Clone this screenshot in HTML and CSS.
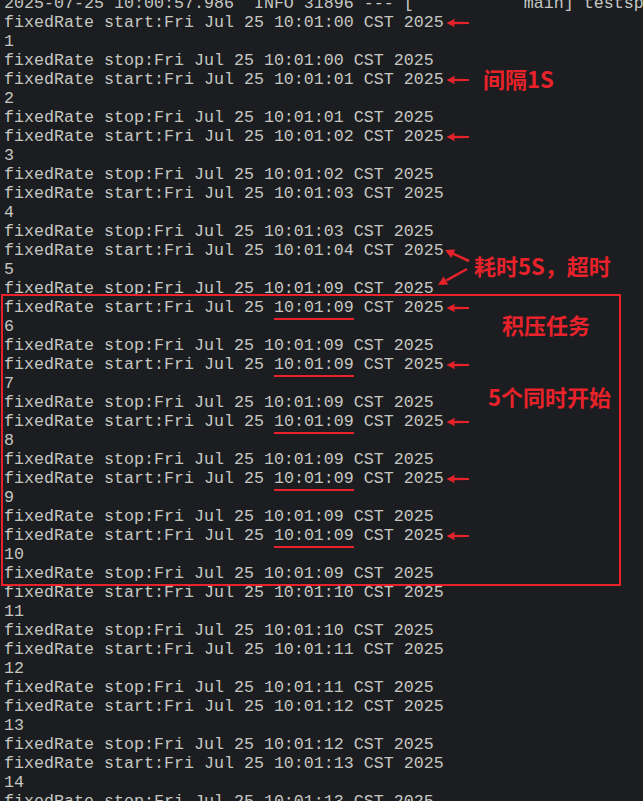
FILE: index.html
```html
<!DOCTYPE html>
<html lang="zh-CN">
<head>
    <meta charset="UTF-8">
    <meta name="viewport" content="width=device-width, initial-scale=1.0">
    <title>fixedRate 日志</title>
    <link rel="stylesheet" href="styles.css">
</head>
<body>

<div class="console">
    <div class="log">
        <div class="line">2025-07-25 10:00:57.986  INFO 31896 --- [           main] testspringboot.ScheduleApplication</div>
        <div class="line">fixedRate start:Fri Jul 25 10:01:00 CST 2025<svg class="arrow" width="24" height="10" viewBox="0 0 24 10"><path d="M0.5 5 L9 0.8 L8 3.8 L23 4 L23 6 L8 6.2 L9 9.2 Z"/></svg></div>
        <div class="line">1</div>
        <div class="line">fixedRate stop:Fri Jul 25 10:01:00 CST 2025</div>
        <div class="line">fixedRate start:Fri Jul 25 10:01:01 CST 2025<svg class="arrow" width="24" height="10" viewBox="0 0 24 10"><path d="M0.5 5 L9 0.8 L8 3.8 L23 4 L23 6 L8 6.2 L9 9.2 Z"/></svg></div>
        <div class="line">2</div>
        <div class="line">fixedRate stop:Fri Jul 25 10:01:01 CST 2025</div>
        <div class="line">fixedRate start:Fri Jul 25 10:01:02 CST 2025<svg class="arrow" width="24" height="10" viewBox="0 0 24 10"><path d="M0.5 5 L9 0.8 L8 3.8 L23 4 L23 6 L8 6.2 L9 9.2 Z"/></svg></div>
        <div class="line">3</div>
        <div class="line">fixedRate stop:Fri Jul 25 10:01:02 CST 2025</div>
        <div class="line">fixedRate start:Fri Jul 25 10:01:03 CST 2025</div>
        <div class="line">4</div>
        <div class="line">fixedRate stop:Fri Jul 25 10:01:03 CST 2025</div>
        <div class="line">fixedRate start:Fri Jul 25 10:01:04 CST 2025</div>
        <div class="line">5</div>
        <div class="line">fixedRate stop:Fri Jul 25 10:01:09 CST 2025</div>
        <div class="line">fixedRate start:Fri Jul 25 <span class="mark">10:01:09</span> CST 2025<svg class="arrow" width="24" height="10" viewBox="0 0 24 10"><path d="M0.5 5 L9 0.8 L8 3.8 L23 4 L23 6 L8 6.2 L9 9.2 Z"/></svg></div>
        <div class="line">6</div>
        <div class="line">fixedRate stop:Fri Jul 25 10:01:09 CST 2025</div>
        <div class="line">fixedRate start:Fri Jul 25 <span class="mark">10:01:09</span> CST 2025<svg class="arrow" width="24" height="10" viewBox="0 0 24 10"><path d="M0.5 5 L9 0.8 L8 3.8 L23 4 L23 6 L8 6.2 L9 9.2 Z"/></svg></div>
        <div class="line">7</div>
        <div class="line">fixedRate stop:Fri Jul 25 10:01:09 CST 2025</div>
        <div class="line">fixedRate start:Fri Jul 25 <span class="mark">10:01:09</span> CST 2025<svg class="arrow" width="24" height="10" viewBox="0 0 24 10"><path d="M0.5 5 L9 0.8 L8 3.8 L23 4 L23 6 L8 6.2 L9 9.2 Z"/></svg></div>
        <div class="line">8</div>
        <div class="line">fixedRate stop:Fri Jul 25 10:01:09 CST 2025</div>
        <div class="line">fixedRate start:Fri Jul 25 <span class="mark">10:01:09</span> CST 2025<svg class="arrow" width="24" height="10" viewBox="0 0 24 10"><path d="M0.5 5 L9 0.8 L8 3.8 L23 4 L23 6 L8 6.2 L9 9.2 Z"/></svg></div>
        <div class="line">9</div>
        <div class="line">fixedRate stop:Fri Jul 25 10:01:09 CST 2025</div>
        <div class="line">fixedRate start:Fri Jul 25 <span class="mark">10:01:09</span> CST 2025<svg class="arrow" width="24" height="10" viewBox="0 0 24 10"><path d="M0.5 5 L9 0.8 L8 3.8 L23 4 L23 6 L8 6.2 L9 9.2 Z"/></svg></div>
        <div class="line">10</div>
        <div class="line">fixedRate stop:Fri Jul 25 10:01:09 CST 2025</div>
        <div class="line">fixedRate start:Fri Jul 25 10:01:10 CST 2025</div>
        <div class="line">11</div>
        <div class="line">fixedRate stop:Fri Jul 25 10:01:10 CST 2025</div>
        <div class="line">fixedRate start:Fri Jul 25 10:01:11 CST 2025</div>
        <div class="line">12</div>
        <div class="line">fixedRate stop:Fri Jul 25 10:01:11 CST 2025</div>
        <div class="line">fixedRate start:Fri Jul 25 10:01:12 CST 2025</div>
        <div class="line">13</div>
        <div class="line">fixedRate stop:Fri Jul 25 10:01:12 CST 2025</div>
        <div class="line">fixedRate start:Fri Jul 25 10:01:13 CST 2025</div>
        <div class="line">14</div>
        <div class="line">fixedRate stop:Fri Jul 25 10:01:13 CST 2025</div>
    </div>

    <!-- anotaciones encima del log -->
    <div class="box"></div>

    <svg class="pointers" width="60" height="55" viewBox="0 0 60 55">
        <line x1="39" y1="21" x2="22" y2="13.2"/>
        <polygon points="15,10 25.3,9.6 21.3,18"/>
        <line x1="37" y1="29" x2="16.5" y2="40.3"/>
        <polygon points="8,45 18.2,44.6 13.6,36.6"/>
    </svg>

    <div class="note note-interval">间隔1S</div>
    <div class="note note-timeout">耗时5S，超时</div>
    <div class="note note-backlog">积压任务</div>
    <div class="note note-same">5个同时开始</div>
</div>

</body>
</html>
```

FILE: styles.css
```css
html, body {
    margin: 0;
    padding: 0;
}

body {
    background-color: #1b1d20;
    height: 801px;
    overflow: hidden;
}

.console {
    position: relative;
    height: 801px;
    overflow: hidden;
}

.log {
    margin-top: -6px;
    padding-left: 4px;
    font-family: "Liberation Mono", "DejaVu Sans Mono", monospace;
    font-size: 16.67px;
    line-height: 19px;
    color: #c6c7c2;
}

.line {
    white-space: pre;
    height: 19px;
}

.arrow {
    vertical-align: -1px;
    margin-left: 2px;
    fill: #e8222a;
}

.mark {
    border-bottom: 2px solid #e8222a;
    padding-bottom: 1px;
}

.box {
    position: absolute;
    left: 1px;
    top: 294px;
    width: 616px;
    height: 288px;
    border: 2px solid #e8222a;
}

.pointers {
    position: absolute;
    left: 430px;
    top: 240px;
}

.pointers line {
    stroke: #e8222a;
    stroke-width: 2.5;
}

.pointers polygon {
    fill: #e8222a;
}

.note {
    position: absolute;
    font-family: "Noto Sans CJK SC", "Noto Sans", sans-serif;
    font-weight: 700;
    font-size: 22px;
    line-height: 22px;
    color: #e8222a;
    white-space: nowrap;
}

.note-interval {
    left: 483px;
    top: 67px;
}

.note-timeout {
    left: 474px;
    top: 254px;
}

.note-backlog {
    left: 502px;
    top: 313px;
}

.note-same {
    left: 488px;
    top: 385px;
}
```
